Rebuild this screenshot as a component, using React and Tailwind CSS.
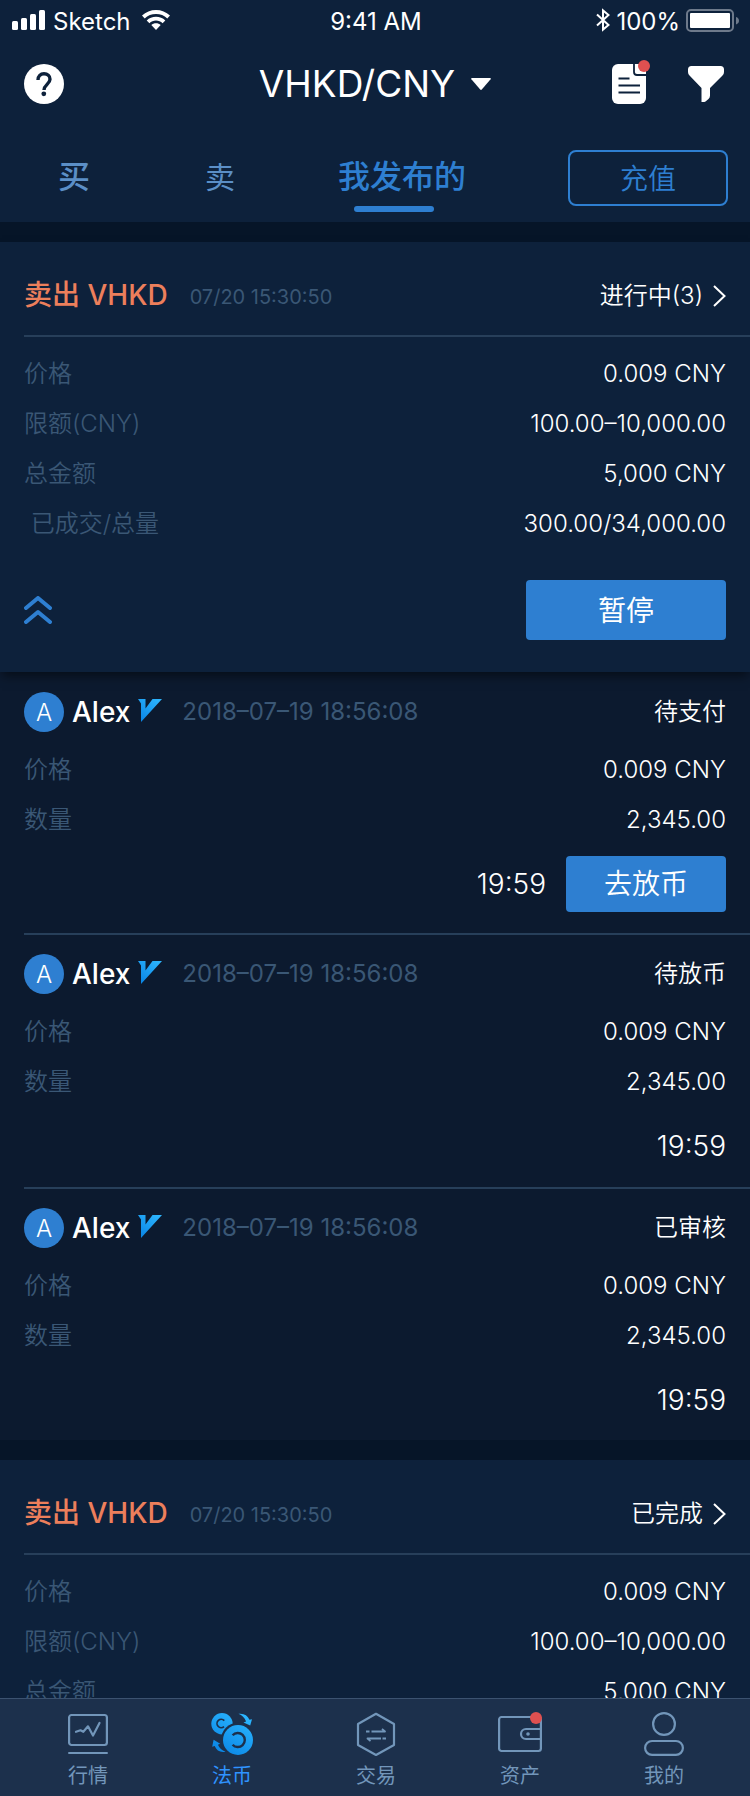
import React from "react";

function SignalIcon() {
  return (
    <svg className="mb-[3px]" width="34" height="20" viewBox="0 0 34 20" fill="#fff" aria-hidden="true">
      <rect x="0" y="11" width="6" height="9" rx="1.5" />
      <rect x="9" y="8" width="6" height="12" rx="1.5" />
      <rect x="18" y="4" width="6" height="16" rx="1.5" />
      <rect x="27" y="0" width="6" height="20" rx="1.5" />
    </svg>
  );
}

function WifiIcon() {
  return (
    <svg className="mb-[3px] ml-1" width="28" height="20" viewBox="0 0 28 20" fill="#fff" aria-hidden="true">
      <path d="M0 5.6C3.8 2 8.7 0 14 0s10.2 2 14 5.6l-2.7 2.8C22.300 5.500 18.300 4 14 4S5.700 5.500 2.700 8.400Z" />
      <path d="M4.700 10.400C7.200 8 10.400 6.800 14 6.800s6.800 1.200 9.300 3.600l-2.700 2.800c-1.800-1.700-4.100-2.600-6.600-2.600s-4.800.900-6.600 2.600Z" />
      <path d="M9.300 15.100C10.600 13.900 12.200 13.300 14 13.300s3.400.600 4.700 1.800L14 20Z" />
    </svg>
  );
}

function BluetoothIcon() {
  return (
    <svg className="mb-[3px]" width="14" height="24" viewBox="0 0 14 24" fill="none" stroke="#fff" strokeWidth="2" aria-hidden="true">
      <path d="M1 6.500 12.500 17 7 21.600V2.400L12.500 7 1 17.500" />
    </svg>
  );
}

function BatteryIcon() {
  return (
    <svg className="mb-[3px]" width="54" height="24" viewBox="0 0 54 24" aria-hidden="true">
      <rect x="1" y="2" width="46" height="21" rx="4" fill="none" stroke="#6e7a8b" strokeWidth="2" />
      <rect x="4" y="5" width="40" height="15" rx="1" fill="#fff" />
      <path d="M50 9c2 .6 3 2 3 3.700S52 15.800 50 16.400Z" fill="#6e7a8b" />
    </svg>
  );
}

function StatusBar() {
  return (
    <div className="grid grid-cols-3 items-center pr-[10px] pb-[2px] pl-3 text-[24px] leading-[40px]">
      <div className="flex items-center gap-[7px]">
        <SignalIcon />
        <span className="pt-[2px]">Sketch</span>
        <WifiIcon />
      </div>
      <div className="pt-[2px] text-center">9:41 AM</div>
      <div className="flex items-center justify-end gap-[6px]">
        <BluetoothIcon />
        <span className="pt-[2px]">100%</span>
        <BatteryIcon />
      </div>
    </div>
  );
}

function HelpIcon() {
  return (
    <svg width="40" height="40" viewBox="0 0 40 40" aria-hidden="true">
      <circle cx="20" cy="20" r="20" fill="#fff" />
      <path
        d="M14 16c0-4 2.500-6.200 6-6.200s6 2.200 6 5.400c0 4.800-6 5.600-6 10.800"
        fill="none"
        stroke="#0d213b"
        strokeWidth="3.400"
      />
      <circle cx="19.800" cy="29.800" r="2.400" fill="#0d213b" />
    </svg>
  );
}

function RecordsIcon() {
  return (
    <svg width="38" height="44" viewBox="0 0 38 44" aria-hidden="true">
      <rect x="0" y="4" width="34" height="40" rx="6" fill="#fff" />
      <path d="M22 3v9q0 3 3 3h10" fill="none" stroke="#0d213b" strokeWidth="1.800" />
      <path d="M6.500 18.500h11M6.500 25.500h21.500M6.500 32.500h21.500" stroke="#0d213b" strokeWidth="2" />
      <circle cx="32" cy="6" r="6" fill="#de5050" />
    </svg>
  );
}

function FunnelIcon() {
  return (
    <svg width="36" height="36" viewBox="0 0 36 36" fill="#fff" aria-hidden="true">
      <path d="M3.500 0h29Q36 0 36 3.500V6q0 2-1.500 3.500L22 22v7.500q0 2-1.500 3.500l-3 2.500Q16.500 36 15 36h-1.500V22L1.500 9.500Q0 8 0 6V3.500Q0 0 3.500 0Z" />
    </svg>
  );
}

function TitleBar() {
  return (
    <div className="flex items-center justify-between px-6">
      <button type="button" aria-label="帮助" className="w-[114px]">
        <HelpIcon />
      </button>
      <button type="button" className="flex items-center gap-4 text-[37px] leading-[80px]">
        <span>VHKD/CNY</span>
        <svg width="20" height="12" viewBox="0 0 20 12" fill="#fff" aria-hidden="true">
          <path d="M1 0h18q1.500 0 .6 1.200l-8.800 10.300q-.8.900-1.600 0L.4 1.200Q-.5 0 1 0Z" />
        </svg>
      </button>
      <div className="flex w-[114px] items-center justify-between pr-[2px]">
        <button type="button" aria-label="订单记录" className="-mt-1">
          <RecordsIcon />
        </button>
        <button type="button" aria-label="筛选">
          <FunnelIcon />
        </button>
      </div>
    </div>
  );
}

function Tabs() {
  return (
    <div className="flex h-[98px] items-center pt-[10px] pr-[22px]">
      <nav className="flex flex-1 items-center pb-[2px] text-[#5b8fc7]">
        <button type="button" className="w-[148px] text-[32px] leading-[60px] font-medium">
          买
        </button>
        <button type="button" className="w-[144px] text-[30px] leading-[60px]">
          卖
        </button>
        <button
          type="button"
          aria-current="page"
          className="relative ml-[46px] text-[32px] leading-[60px] font-medium text-[#2e7fd1]"
        >
          我发布的
          <span className="absolute -bottom-[5px] left-4 h-[6px] w-20 rounded-full bg-[#2e7fd1]" />
        </button>
      </nav>
      <button
        type="button"
        className="h-14 w-40 rounded-lg border-2 border-[#2e7fd1] pt-[2px] text-[28px] font-[350] text-[#2e7fd1]"
      >
        充值
      </button>
    </div>
  );
}

function Row({ label, value }) {
  return (
    <div className="flex justify-between">
      <dt className="whitespace-pre text-[#3a5775]">{label}</dt>
      <dd>{value}</dd>
    </div>
  );
}

function Listing({ status, rows, children }) {
  return (
    <section className="relative bg-[#0d213b]">
      <div className="ml-6 flex items-center border-b-2 border-[#273f5a] pt-8 pr-6 pb-[19px] leading-[42px]">
        <h2 className="text-[28px] font-medium text-[#ec7f5b]">卖出 VHKD</h2>
        <time className="pt-1 pl-[22px] text-[20px] leading-[38px] text-[#3a5775]">07/20 15:30:50</time>
        <a href="#orders" className="ml-auto flex items-center gap-[10px] pt-[2px] text-[24px] leading-[40px] font-[350]">
          {status}
          <svg width="13" height="22" viewBox="0 0 13 22" fill="none" stroke="#fff" strokeWidth="2" aria-hidden="true">
            <path d="M1 1l10.500 10L1 21" />
          </svg>
        </a>
      </div>
      <dl className="px-6 pt-3 text-[24px] leading-[50px] font-[350]">
        {rows.map(([label, value]) => (
          <Row key={label} label={label} value={value} />
        ))}
      </dl>
      {children}
    </section>
  );
}

function VerifiedIcon() {
  return (
    <svg width="24" height="23" viewBox="0 0 24 23" aria-hidden="true">
      <defs>
        <linearGradient id="verified" x1="1" y1="0" x2="0.200" y2="1">
          <stop offset="0" stopColor="#2fb8ff" />
          <stop offset="1" stopColor="#0a86e6" />
        </linearGradient>
      </defs>
      <path d="M0 0h7.500v9.500L14.500 0H24L3 23V4.500Z" fill="url(#verified)" />
    </svg>
  );
}

function Order({ status, time, action }) {
  return (
    <li className="group">
      <div
        className={`px-6 pt-[19px] text-[24px] font-[350] group-first:pt-5 group-last:pb-3 ${action ? "pb-[21px]" : "pb-[13px]"}`}
      >
        <div className="flex items-center leading-[40px]">
          <span className="size-10 rounded-full bg-[#2e7fd1] text-center leading-[42px]">A</span>
          <span className="pl-2 text-[28px] font-medium">Alex</span>
          <span className="-mt-1 pl-2">
            <VerifiedIcon />
          </span>
          <time className="pl-5 font-normal text-[#3a5775]">2018–07–19 18:56:08</time>
          <span className="ml-auto">{status}</span>
        </div>
        <dl className="pt-[13px] leading-[50px]">
          <Row label="价格" value="0.009 CNY" />
          <Row label="数量" value="2,345.00" />
        </dl>
        <div className="flex items-center justify-end gap-5 pt-[11px] text-[28px] leading-[56px]">
          <span>{time}</span>
          {action && (
            <button type="button" className="h-14 w-40 rounded bg-[#2e7fd1]">
              {action}
            </button>
          )}
        </div>
      </div>
    </li>
  );
}

const iconStroke = "#7296ba";

function MarketIcon() {
  return (
    <svg width="40" height="44" viewBox="0 0 40 44" fill="none" stroke={iconStroke} strokeWidth="2.200" strokeLinecap="round" strokeLinejoin="round" aria-hidden="true">
      <rect x="1.100" y="3" width="37.800" height="30" rx="2.500" />
      <path d="M1.100 41h37.800" />
      <path d="M8 19.800l4.500-1.500 2.800 1.500 4.700-5.500 5 9.300L31.500 11" />
    </svg>
  );
}

function FiatIcon() {
  return (
    <svg width="44" height="44" viewBox="0 0 44 44" fill="none" aria-hidden="true">
      <defs>
        <linearGradient id="fiat" x1="36" y1="4" x2="12" y2="42" gradientUnits="userSpaceOnUse">
          <stop offset="0" stopColor="#2bb6ff" />
          <stop offset="1" stopColor="#0a86e6" />
        </linearGradient>
      </defs>
      <circle cx="12" cy="11.700" r="10.700" fill="url(#fiat)" />
      <path d="M14.300 8.600a4.200 4.200 0 1 0-.3 6" stroke="#1c304c" strokeWidth="1.700" />
      <circle cx="28" cy="28" r="17.200" fill="#1c304c" />
      <circle cx="28" cy="28" r="15" fill="url(#fiat)" />
      <path d="M22.600 23.300a7 7 0 1 1 0 9.400" stroke="#1c304c" strokeWidth="2.400" />
      <path d="M28.500 1.800c5.500-.6 9 1.400 11 6l2.500-.6-1.800 6.300-6.700-3 2.600-1.100c-1.600-3.800-4-6.200-7.600-7.600Z" fill="url(#fiat)" />
      <path d="M15.500 39.800c-5.500.9-9-1.200-10.800-5.800l-2.500.8 1.400-7 6.600 4-2.300 1c1.400 3.200 4 5.800 7.600 7Z" fill="url(#fiat)" />
    </svg>
  );
}

function TradeIcon() {
  return (
    <svg width="40" height="44" viewBox="0 0 40 44" fill="none" stroke={iconStroke} strokeWidth="2.200" strokeLinejoin="round" aria-hidden="true">
      <path d="M20 1.800 38 12v21L20 43 2 33V12Z" />
      <path d="M10 19.500h3.500M15.500 19.500h13.500l-3-2.600M30 26.500h-3.500M25 26.500H11.500l3 2.600" strokeWidth="1.800" />
    </svg>
  );
}

function AssetsIcon() {
  return (
    <svg width="44" height="44" viewBox="0 0 44 44" fill="none" stroke={iconStroke} strokeWidth="2.200" aria-hidden="true">
      <rect x="1.100" y="5" width="41.800" height="34" rx="2.500" />
      <path d="M43 17H28a5 5 0 0 0 0 10h15" />
      <circle cx="30" cy="22" r="1.800" fill={iconStroke} stroke="none" />
      <circle cx="38" cy="6" r="6" fill="#de5050" stroke="none" />
    </svg>
  );
}

function ProfileIcon() {
  return (
    <svg width="40" height="44" viewBox="0 0 40 44" fill="none" stroke={iconStroke} strokeWidth="2.200" aria-hidden="true">
      <circle cx="20" cy="12" r="10.900" />
      <rect x="1.100" y="29" width="37.800" height="13.900" rx="6.950" />
    </svg>
  );
}

const navItems = [
  { label: "行情", Icon: MarketIcon },
  { label: "法币", Icon: FiatIcon, active: true },
  { label: "交易", Icon: TradeIcon },
  { label: "资产", Icon: AssetsIcon },
  { label: "我的", Icon: ProfileIcon },
];

function BottomNav() {
  return (
    <nav className="grid shrink-0 grid-cols-5 border-t border-[#3b5270] bg-[#1c304c] pt-[13px] pr-[14px] pb-1 pl-4">
      {navItems.map(({ label, Icon, active }) => (
        <a
          key={label}
          href={`#${label}`}
          aria-current={active ? "page" : undefined}
          className={`flex flex-col items-center gap-1 text-[20px] leading-[32px] ${active ? "text-[#2f93ff]" : "text-[#7296ba]"}`}
        >
          <Icon />
          {label}
        </a>
      ))}
    </nav>
  );
}

const listingRows = [
  ["价格", "0.009 CNY"],
  ["限额(CNY)", "100.00–10,000.00"],
  ["总金额", "5,000 CNY"],
  [" 已成交/总量", "300.00/34,000.00"],
];

export default function App() {
  return (
    <div className="flex h-screen flex-col bg-[#061528] font-['Inter','Noto_Sans_CJK_SC',sans-serif] text-white">
      <header className="shrink-0 bg-[#0d213b]">
        <StatusBar />
        <TitleBar />
        <Tabs />
      </header>
      <main className="min-h-0 flex-1 space-y-5 overflow-y-auto pt-5 [scrollbar-width:none]">
        <div>
          <div className="relative z-10 shadow-[0_6px_10px_-2px_rgba(0,0,0,0.5)]">
            <Listing status="进行中(3)" rows={listingRows}>
              <div className="flex items-center justify-between px-6 pt-[31px] pb-8">
                <button type="button" aria-label="收起">
                  <svg width="28" height="28" viewBox="0 0 28 28" fill="none" stroke="#2e7fd1" strokeWidth="4" strokeLinecap="round" strokeLinejoin="round" aria-hidden="true">
                    <path d="M2 12 14 2l12 10M2 26l12-10 12 10" />
                  </svg>
                </button>
                <button type="button" className="h-15 w-50 rounded bg-[#2e7fd1] pt-[2px] text-[28px]">
                  暂停
                </button>
              </div>
            </Listing>
          </div>
          <ul className="bg-[#0c1a2f] [&>li+li]:before:ml-6 [&>li+li]:before:block [&>li+li]:before:h-[2px] [&>li+li]:before:bg-[#273f5a]">
            <Order status="待支付" time="19:59" action="去放币" />
            <Order status="待放币" time="19:59" />
            <Order status="已审核" time="19:59" />
          </ul>
        </div>
        <Listing status="已完成" rows={listingRows} />
      </main>
      <BottomNav />
    </div>
  );
}
